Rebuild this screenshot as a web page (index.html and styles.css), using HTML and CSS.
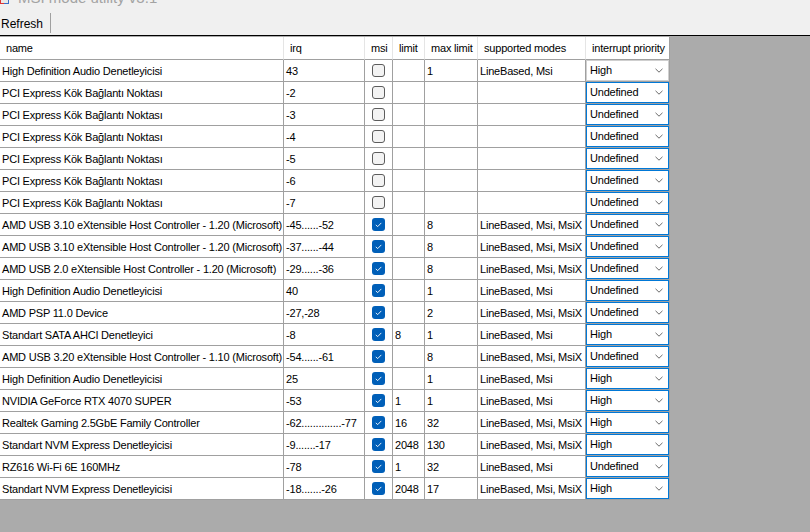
FILE: index.html
```html
<!DOCTYPE html>
<html lang="en">
<head>
  <meta charset="UTF-8" />
  <title>MSI mode utility v3.1</title>
  <link rel="stylesheet" href="styles.css">
</head>
<body>
  <div class="titlebar">
    <svg class="app-icon" width="9" height="10" viewBox="0 0 9 10">
      <rect x="0" y="0" width="4" height="10" fill="#d33"/>
      <rect x="4" y="0" width="5" height="10" fill="#3a6fc9"/>
      <rect x="1" y="6" width="7" height="3" fill="#e8e8e8"/>
    </svg>
    <span class="title-text">MSI mode utility v3.1</span>
  </div>

  <div class="toolbar">
    <button class="tool-btn">Refresh</button>
    <span class="tool-sep"></span>
  </div>
  <div class="rule"></div>

  <div class="workspace">
    <div class="grid" id="grid">
      <div class="row head">
        <div class="cell">name</div>
        <div class="cell">irq</div>
        <div class="cell">msi</div>
        <div class="cell">limit</div>
        <div class="cell">max limit</div>
        <div class="cell">supported modes</div>
        <div class="cell">interrupt priority</div>
      </div>
    </div>
  </div>

  <script>
    const devices = [
      ["High Definition Audio Denetleyicisi", "43", false, "", "1", "LineBased, Msi", "High"],
      ["PCI Express Kök Bağlantı Noktası", "-2", false, "", "", "", "Undefined"],
      ["PCI Express Kök Bağlantı Noktası", "-3", false, "", "", "", "Undefined"],
      ["PCI Express Kök Bağlantı Noktası", "-4", false, "", "", "", "Undefined"],
      ["PCI Express Kök Bağlantı Noktası", "-5", false, "", "", "", "Undefined"],
      ["PCI Express Kök Bağlantı Noktası", "-6", false, "", "", "", "Undefined"],
      ["PCI Express Kök Bağlantı Noktası", "-7", false, "", "", "", "Undefined"],
      ["AMD USB 3.10 eXtensible Host Controller - 1.20 (Microsoft)", "-45......-52", true, "", "8", "LineBased, Msi, MsiX", "Undefined"],
      ["AMD USB 3.10 eXtensible Host Controller - 1.20 (Microsoft)", "-37......-44", true, "", "8", "LineBased, Msi, MsiX", "Undefined"],
      ["AMD USB 2.0 eXtensible Host Controller - 1.20 (Microsoft)", "-29......-36", true, "", "8", "LineBased, Msi, MsiX", "Undefined"],
      ["High Definition Audio Denetleyicisi", "40", true, "", "1", "LineBased, Msi", "Undefined"],
      ["AMD PSP 11.0 Device", "-27,-28", true, "", "2", "LineBased, Msi, MsiX", "Undefined"],
      ["Standart SATA AHCI Denetleyici", "-8", true, "8", "1", "LineBased, Msi", "High"],
      ["AMD USB 3.20 eXtensible Host Controller - 1.10 (Microsoft)", "-54......-61", true, "", "8", "LineBased, Msi, MsiX", "Undefined"],
      ["High Definition Audio Denetleyicisi", "25", true, "", "1", "LineBased, Msi", "High"],
      ["NVIDIA GeForce RTX 4070 SUPER", "-53", true, "1", "1", "LineBased, Msi", "High"],
      ["Realtek Gaming 2.5GbE Family Controller", "-62..............-77", true, "16", "32", "LineBased, Msi, MsiX", "High"],
      ["Standart NVM Express Denetleyicisi", "-9.......-17", true, "2048", "130", "LineBased, Msi, MsiX", "High"],
      ["RZ616 Wi-Fi 6E 160MHz", "-78", true, "1", "32", "LineBased, Msi", "Undefined"],
      ["Standart NVM Express Denetleyicisi", "-18.......-26", true, "2048", "17", "LineBased, Msi, MsiX", "High"]
    ];

    const grid = document.getElementById("grid");
    const chevron = '<svg class="chevron" width="8" height="5" viewBox="0 0 8 5"><path d="M0.5 0.8 L4 4.2 L7.5 0.8" fill="none" stroke="#6a6a6a" stroke-width="1"/></svg>';
    const tick = '<svg width="13" height="13" viewBox="0 0 13 13"><path d="M3.8 6.9 L5.7 8.6 L9.3 4.9" fill="none" stroke="#fff" stroke-width="0.9"/></svg>';

    devices.forEach((d, i) => {
      const row = document.createElement("div");
      row.className = "row";
      const [name, irq, msi, limit, maxLimit, modes, priority] = d;
      row.innerHTML =
        `<div class="cell">${name}</div>` +
        `<div class="cell">${irq}</div>` +
        `<div class="cell check-cell"><span class="check${msi ? " on" : ""}">${msi ? tick : ""}</span></div>` +
        `<div class="cell">${limit}</div>` +
        `<div class="cell">${maxLimit}</div>` +
        `<div class="cell">${modes}</div>` +
        `<div class="cell combo-cell"><div class="combo${i === 0 ? " idle" : ""}"><span>${priority}</span>${chevron}</div></div>`;
      grid.appendChild(row);
    });
  </script>
</body>
</html>
```

FILE: styles.css
```css
body {
  margin: 0;
  width: 810px;
  height: 532px;
  overflow: hidden;
  display: flex;
  flex-direction: column;
  font-family: "Liberation Sans", Arial, sans-serif;
  font-size: 11px;
  letter-spacing: -0.2px;
  color: #000;
  background: #f0f0f0;
}

.titlebar {
  height: 10px;
  overflow: hidden;
  display: flex;
  align-items: flex-start;
  gap: 9px;
  background: #f0f0f0;
}

.app-icon {
  flex: none;
  margin-top: -6px;
}

.title-text {
  font-size: 15px;
  line-height: 15px;
  letter-spacing: 0;
  color: #a3a3a3;
  margin-top: -10px;
}

.toolbar {
  height: 25px;
  display: flex;
  align-items: center;
  background: #f0f0f0;
}

.tool-btn {
  font: inherit;
  font-size: 12px;
  letter-spacing: 0;
  background: none;
  border: none;
  padding: 2px 6px 0 1px;
  color: #000;
}

.tool-sep {
  width: 1px;
  height: 20px;
  background: #a0a0a0;
  margin-left: 1px;
}

.rule {
  height: 1px;
  background: #000;
}

.workspace {
  flex: 1;
  background: #ababab;
  padding-top: 1px;
}

.grid {
  width: 670px;
  background: #fff;
}

.row {
  display: grid;
  grid-template-columns: 284px 81px 28px 32px 53px 108px 84px;
  height: 22px;
}

.cell {
  box-sizing: border-box;
  border-right: 1px solid #a0a0a0;
  border-bottom: 1px solid #a0a0a0;
  padding: 0 2px;
  line-height: 22px;
  white-space: nowrap;
  overflow: hidden;
}

.row.head {
  height: 23px;
}

.head .cell {
  padding: 0 6px;
  line-height: 23px;
  border-right-color: #e5e5e5;
}

.head .cell:last-child {
  border-right-color: #a0a0a0;
}

.check-cell {
  display: flex;
  align-items: center;
  justify-content: center;
}

.check {
  box-sizing: border-box;
  width: 13px;
  height: 13px;
  border: 1px solid #5c5c5c;
  border-radius: 3px;
  background: #f3f3f3;
  display: flex;
}

.check.on {
  border: none;
  background: #005fb8;
}

.combo-cell {
  padding: 0;
}

.combo {
  box-sizing: border-box;
  height: 21px;
  border: 1px solid #0078d7;
  display: flex;
  align-items: center;
  justify-content: space-between;
  padding: 0 5px 0 3px;
  line-height: 19px;
}

.combo.idle {
  border-color: #cfcfcf;
}
```
